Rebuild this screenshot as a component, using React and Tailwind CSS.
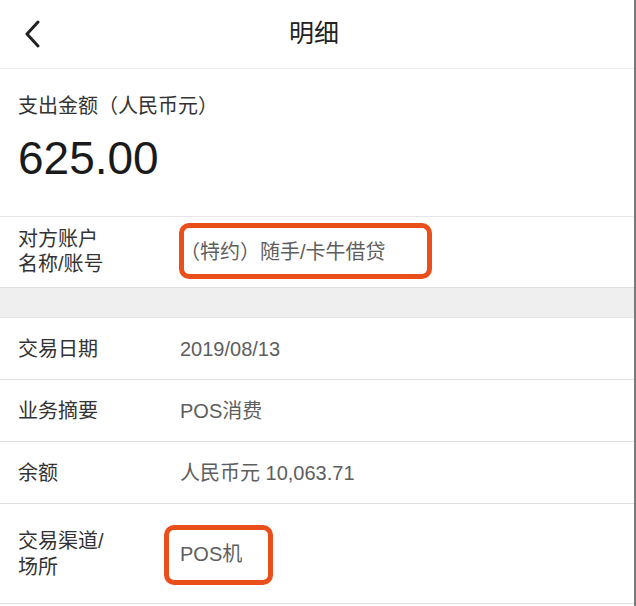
import React from 'react';

const rows = [
  { label: '交易日期', value: '2019/08/13' },
  { label: '业务摘要', value: 'POS消费' },
  { label: '余额', value: '人民币元 10,063.71' },
];

const BackIcon = () => (
  <svg width="20" height="28" viewBox="0 0 20 28" fill="none">
    <path d="M16 2 L5 14 L16 26" stroke="#222" strokeWidth="3" strokeLinecap="round" strokeLinejoin="round" />
  </svg>
);

const App = () => {
  return (
    <div className="w-[636px] h-[606px] overflow-hidden bg-white border-r-2 border-[#7b7b7b] font-['Liberation_Sans','Noto_Sans_CJK_SC',sans-serif]">
      {/* header */}
      <div className="h-[69px] grid grid-cols-[100px_1fr_106px] items-center border-b border-[#ececec]">
        <div className="pl-[22px] flex items-center">
          <BackIcon />
        </div>
        <div className="text-center text-[25px] text-[#222]">明细</div>
        <div />
      </div>

      {/* amount */}
      <div className="h-[148px] px-[18px] pt-[24px] border-b border-[#e6e6e6]">
        <div className="text-[20px] leading-[26px] text-[#333]">支出金额（人民币元）</div>
        <div className="mt-[13px] text-[46px] leading-[52px] text-[#1a1a1a]">625.00</div>
      </div>

      {/* counterparty */}
      <div className="relative h-[71px] flex items-center border-b border-[#dedede]">
        <div className="w-[180px] pl-[18px] text-[20px] leading-[25px] text-[#333]">
          对方账户
          <br />
          名称/账号
        </div>
        <div className="text-[20px] text-[#5e5e5e]">（特约）随手/卡牛借贷</div>
        <div className="absolute left-[179px] top-[6px] w-[253px] h-[56px] rounded-[10px] border-[5px] border-[#e94e1b]" />
      </div>

      <div className="h-[30px] bg-[#efefef] border-b border-[#e6e6e6]" />

      {rows.map((row) => (
        <div key={row.label} className="h-[62px] flex items-center border-b border-[#dedede]">
          <div className="w-[180px] pl-[18px] text-[20px] text-[#333]">{row.label}</div>
          <div className="text-[20px] text-[#5e5e5e]">{row.value}</div>
        </div>
      ))}

      {/* channel */}
      <div className="relative h-[100px] flex items-center border-b border-[#dedede]">
        <div className="w-[180px] pl-[18px] text-[20px] leading-[26px] text-[#333]">
          交易渠道/
          <br />
          场所
        </div>
        <div className="text-[20px] text-[#5e5e5e]">POS机</div>
        <div className="absolute left-[164px] top-[21px] w-[109px] h-[60px] rounded-[10px] border-[5px] border-[#e94e1b]" />
      </div>
    </div>
  );
};

export default App;
